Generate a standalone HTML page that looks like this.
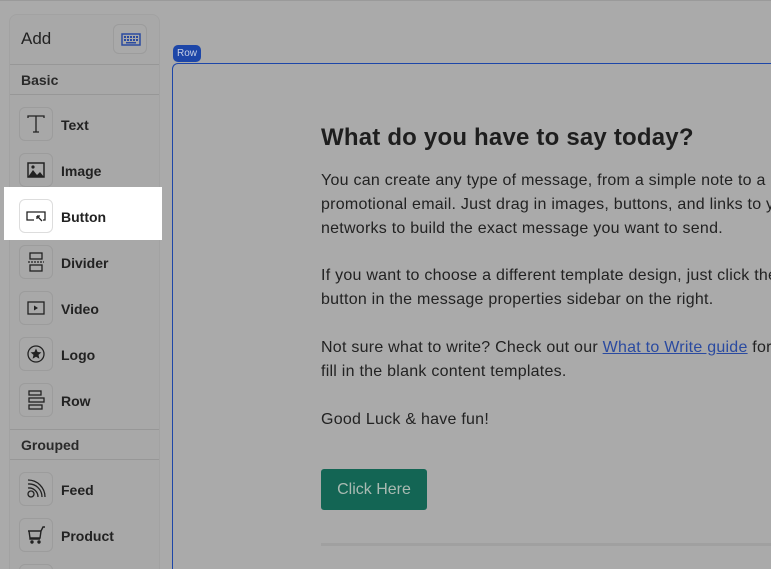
<!DOCTYPE html>
<html style="overflow:hidden;width:771px;height:569px"><head><meta charset="utf-8"><style>
*{box-sizing:border-box;margin:0;padding:0}
body{width:771px;height:569px;overflow:hidden;background:#aaaaaa;font-family:"Liberation Sans",Arial,sans-serif;position:relative;color:#222}
.top{position:absolute;left:0;top:0;width:771px;height:1px;background:#9a9a9a}
.panel{position:absolute;left:9px;top:14px;width:151px;height:570px;border:1px solid #a2a2a2;border-radius:8px;background:#a8a8a8}
.hdr{position:absolute;left:21px;top:29px;font-size:17px;color:#222}
.kb{position:absolute;left:113px;top:24px;width:34px;height:30px;border:1px solid #9c9c9c;border-radius:6px;background:#a9a9a9}
.line{position:absolute;left:10px;width:149px;height:1px;background:#979797}
.sec{position:absolute;left:21px;font-size:14px;font-weight:bold;color:#2a2a2a}
.item{position:absolute;left:19px;width:34px;height:34px;border:1px solid #9c9c9c;border-radius:6px;display:flex;align-items:center;justify-content:center}
.lbl{position:absolute;left:61px;font-size:14px;font-weight:bold;color:#222}
.hl{position:absolute;left:4px;top:187px;width:158px;height:53px;background:#fff}
.tag{position:absolute;left:173px;top:45px;width:28px;height:17px;background:#1d46a8;border-radius:5px;color:#c8d0e4;font-size:10px;text-align:center;line-height:17px}
.frame{position:absolute;left:172px;top:63px;width:599px;height:506px;border-left:1.5px solid #1d46a8;border-top:1.5px solid #1d46a8;border-top-left-radius:6px}
.wrap{position:absolute;left:0;top:0;width:771px;height:569px;overflow:hidden}
.c{position:absolute;left:321px;white-space:nowrap}
h1{position:absolute;left:321px;top:124px;font-size:24px;letter-spacing:0.2px;font-weight:bold;white-space:nowrap;color:#1e1e1e}
p.c{font-size:16px;line-height:24px;color:#222;letter-spacing:0.25px}
a{color:#2a4aa0;text-decoration:underline}
.btn{position:absolute;left:321px;top:469px;width:106px;height:41px;background:#136554;border-radius:3px;color:#a9bab2;font-size:16px;text-align:center;line-height:41px}
.div{position:absolute;left:321px;top:543px;width:450px;height:3px;background:#a0a0a0}
</style></head><body><div class="wrap">
<div class="top"></div>
<div class="panel"></div>
<div class="hdr">Add</div>
<div class="kb"><svg width="34" height="30" viewBox="0 0 34 30"><rect x="8" y="9" width="18" height="11" fill="none" stroke="#2a4aa0" stroke-width="1.5"/><g fill="#2a4aa0"><rect x="10" y="11" width="2" height="2"/><rect x="13" y="11" width="2" height="2"/><rect x="16" y="11" width="2" height="2"/><rect x="19" y="11" width="2" height="2"/><rect x="22" y="11" width="2" height="2"/><rect x="10" y="14" width="2" height="2"/><rect x="13" y="14" width="2" height="2"/><rect x="16" y="14" width="2" height="2"/><rect x="19" y="14" width="2" height="2"/><rect x="22" y="14" width="2" height="2"/><rect x="12" y="17" width="10" height="1.5"/></g></svg></div>
<div class="line" style="top:64px"></div>
<div class="sec" style="top:72px">Basic</div>
<div class="line" style="top:94px"></div>
<div class="hl"></div>

<div class="item" style="top:107px"><svg width="20" height="20" viewBox="0 0 20 20" fill="none" stroke="#222" stroke-width="1.3"><path d="M2 4V2h16v2M10 2v16M7 18h6"/></svg></div><div class="lbl" style="top:117px">Text</div>
<div class="item" style="top:153px"><svg width="20" height="20" viewBox="0 0 20 20"><rect x="2" y="3" width="16" height="14" fill="none" stroke="#222" stroke-width="1.5"/><path d="M2 17l5-7 4 5 3-3 4 5z" fill="#222"/><circle cx="7" cy="7" r="1.6" fill="#222"/></svg></div><div class="lbl" style="top:163px">Image</div>
<div class="item" style="top:199px;background:#fff;border-color:#ddd"><svg width="22" height="20" viewBox="0 0 22 20" fill="none" stroke="#222" stroke-width="1.3"><path d="M9 14H2V6h18v8h-2"/><path d="M12 10l5 5M12 10v3M12 10h3"/></svg></div><div class="lbl" style="top:209px">Button</div>
<div class="item" style="top:245px"><svg width="20" height="22" viewBox="0 0 20 22" fill="none" stroke="#222" stroke-width="1.3"><rect x="4" y="2" width="12" height="6"/><rect x="4" y="14" width="12" height="6"/><path d="M2 11h16" stroke-dasharray="2 1"/></svg></div><div class="lbl" style="top:255px">Divider</div>
<div class="item" style="top:291px"><svg width="20" height="20" viewBox="0 0 20 20"><rect x="2" y="4" width="16" height="12" fill="none" stroke="#222" stroke-width="1.3"/><path d="M8 7.5v5l4-2.5z" fill="#222"/></svg></div><div class="lbl" style="top:301px">Video</div>
<div class="item" style="top:337px"><svg width="20" height="20" viewBox="0 0 20 20"><circle cx="10" cy="10" r="8" fill="none" stroke="#222" stroke-width="1.3"/><path d="M10 4.5l1.6 3.5 3.8.4-2.9 2.5.9 3.8L10 12.7l-3.4 2 .9-3.8-2.9-2.5 3.8-.4z" fill="#222"/></svg></div><div class="lbl" style="top:347px">Logo</div>
<div class="item" style="top:383px"><svg width="20" height="22" viewBox="0 0 20 22" fill="none" stroke="#222" stroke-width="1.3"><rect x="3" y="2" width="12" height="4"/><rect x="3" y="9" width="15" height="4"/><rect x="3" y="16" width="13" height="4"/></svg></div><div class="lbl" style="top:393px">Row</div>

<div class="line" style="top:429px"></div>
<div class="sec" style="top:437px">Grouped</div>
<div class="line" style="top:459px"></div>

<div class="item" style="top:472px"><svg width="20" height="20" viewBox="0 0 20 20" fill="none" stroke="#222" stroke-width="1.3"><circle cx="5" cy="15" r="3"/><path d="M2 9a9 9 0 0 1 10 9M2 5a13 13 0 0 1 14 13M2 1a17 17 0 0 1 17 17"/></svg></div><div class="lbl" style="top:482px">Feed</div>
<div class="item" style="top:518px"><svg width="20" height="20" viewBox="0 0 20 20" fill="none" stroke="#222" stroke-width="1.4"><path d="M2 6h13l2-4h2M3 6l1 7h10l1-7M4 13v1h10"/><circle cx="6" cy="17" r="1" fill="#222"/><circle cx="13" cy="17" r="1" fill="#222"/></svg></div><div class="lbl" style="top:528px">Product</div>
<div class="item" style="top:564px"></div>

<div class="tag">Row</div>
<div class="frame"></div>
<h1>What do you have to say today?</h1>
<p class="c" style="top:169px">You can create any type of message, from a simple note to a detailed</p>
<p class="c" style="top:193px">promotional email. Just drag in images, buttons, and links to your social</p>
<p class="c" style="top:217px">networks to build the exact message you want to send.</p>
<p class="c" style="top:264px">If you want to choose a different template design, just click the Change</p>
<p class="c" style="top:288px">button in the message properties sidebar on the right.</p>
<p class="c" style="top:336px">Not sure what to write? Check out our <a>What to Write guide</a> for tips</p>
<p class="c" style="top:360px">fill in the blank content templates.</p>
<p class="c" style="top:408px">Good Luck &amp; have fun!</p>
<div class="btn">Click Here</div>
<div class="div"></div>
</div></body></html>
